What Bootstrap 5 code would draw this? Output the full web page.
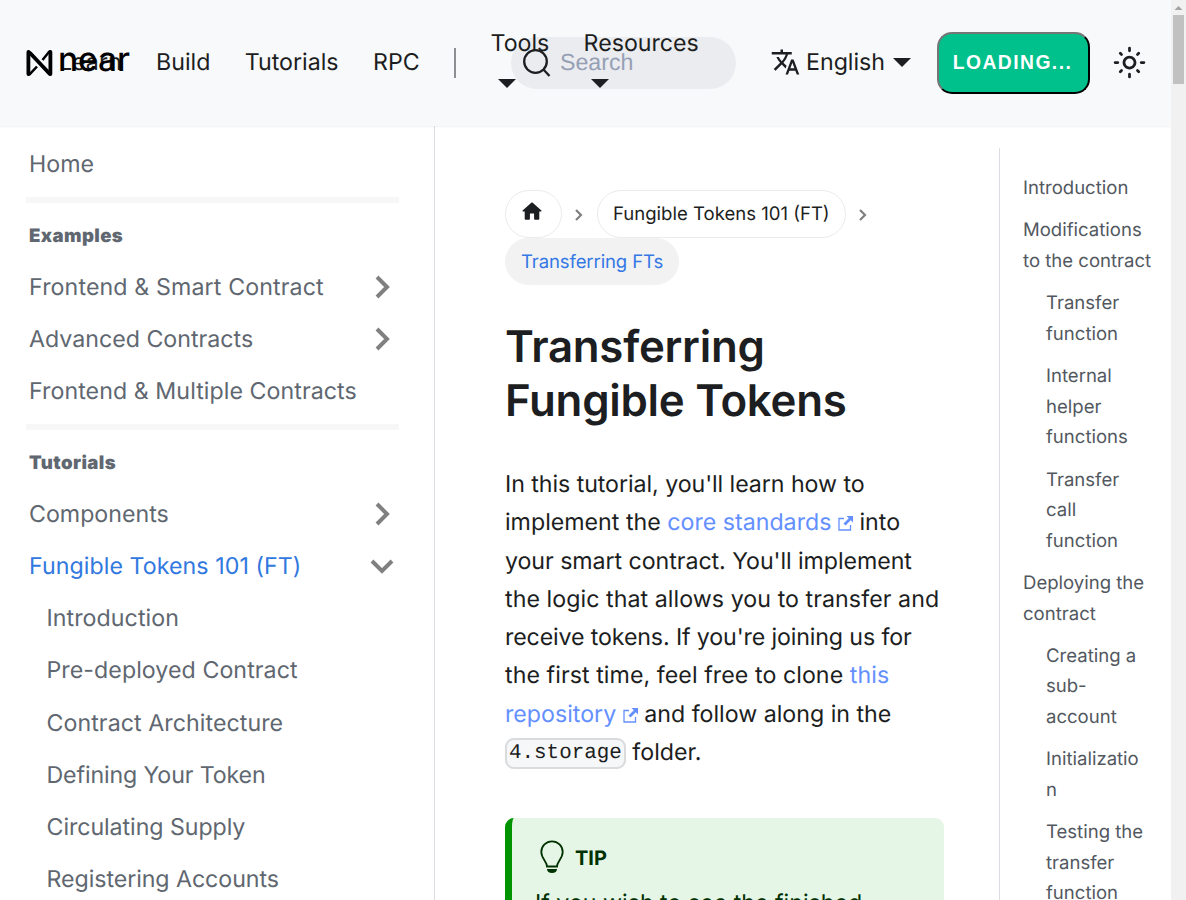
<!DOCTYPE html>
<html lang="en">
<head>
<meta charset="utf-8">
<meta name="viewport" content="width=device-width, initial-scale=1">
<title>Transferring Fungible Tokens | NEAR Documentation</title>
<link href="https://cdn.jsdelivr.net/npm/bootstrap@5.3.0/dist/css/bootstrap.min.css" rel="stylesheet">
<style>
body{font-family:Inter,"Liberation Sans",sans-serif;font-size:23.2px;line-height:38.3px;color:#1c1e21;height:900px;text-rendering:geometricPrecision}
a{text-decoration:none;color:inherit}
.page{width:1171px}
.topbar{height:126px;background:#f8f9fb;box-shadow:0 1px 2px rgba(0,0,0,.06);position:relative;z-index:3;padding-bottom:1px}
.left-items{width:511px;padding-left:59px;position:relative;z-index:2;white-space:nowrap}
.logo{position:absolute;left:26px;top:43px;z-index:3}
.logo svg{position:relative;top:-1px}
.logo-word{font-size:33.5px;font-weight:500;line-height:38px;color:#000;position:absolute;left:32px;top:-2px;letter-spacing:-.1px}
.left-items .item{margin-right:34.4px}
.rule{width:2px;height:30px;background:#8e8f92;margin-right:34.5px}
.drop{width:58px;margin-right:35px;height:77px}
.drop.wide{width:114px}
.dlab{line-height:38px;margin-bottom:17px}
.tri{border:9px solid transparent;border-top-color:#1c1e21;border-bottom:0;display:inline-block}
.drop .tri{margin-left:7px}
.search{width:225px;height:52px;background:#ebecf0;border-radius:26px;padding-left:12px;color:#96a0b5;font-family:"Liberation Sans",sans-serif}
.search span{margin-left:9px}
.lang{margin-left:33px}
.load{width:153px;height:62px;border:2px outset #1c1e21;border-color:#767676 #1c1e21 #1c1e21 #767676;border-radius:15px;background:#00c08b;color:#fff;font:bold 19.3px "Liberation Sans",sans-serif;letter-spacing:1.45px;margin-left:26px;margin-right:23px;padding:0 2px 0 0}
.side{width:435px;border-right:1px solid #dadde1;color:#606770;padding:12px 36px 0 26px}
.side .entry{height:52.15px;padding:0 3px;white-space:nowrap}
.side .sub{padding-left:20.5px}
.side .sep{height:6px;background:#f7f7f7;width:373px;margin:7px 0 8px}
.side .sep.second{margin-top:6.5px}
.side .group{font-size:18.6px;font-weight:900;height:50px;padding:1px 3px 0;letter-spacing:.4px}
.open-entry{color:#3178e0}
.chev{margin-right:4px}
.chev-down{margin-right:1px}
.wider{letter-spacing:.12px}
.wide-a{letter-spacing:.06px}
.tight-a{letter-spacing:-.06px}
.tight-b{letter-spacing:-.13px}
.main-col{padding:64px 0 0 70px;width:564px}
.crumb{height:47.5px;border:1px solid #ebebeb;border-radius:24px;padding:0 15px;font-size:18.56px;line-height:47px}
.crumb.home{width:57px}
.crumb.home svg{margin:-4px 3px 0 0}
.crumb.current{background:#f2f2f2;color:#3578e5;border-color:#f2f2f2;letter-spacing:-.12px;line-height:46px}
.crumbs{width:440px}
h1{font-size:43.8px;line-height:54px;font-weight:600;letter-spacing:-.25px;margin-top:35px}
.article{margin-top:37px}
.lnk{color:#6490ff}
.code-bit{font:20.9px/24px "Liberation Mono",monospace;color:#1c1e21;background:#f6f7f8;border:2px solid #dadbdd;border-radius:9px;padding:2px 2px;vertical-align:2px}
.tip{width:439px;height:200px;background:#e6f6e6;border-left:7px solid #009400;border-radius:9px;color:#003100;padding:20px 23px;margin-top:47px}
.tip-head{font-size:20px;height:40px}
.tip-head svg{margin:-2px 11px 0 5px}
.tip p{margin-top:6px}
.toc{border-left:1px solid #dadde1;margin-top:22px;width:172px;padding:25px 12px 0 23px;color:#525860;font-size:18.56px;line-height:30.6px}
.toc div{margin-bottom:11.7px;overflow-wrap:anywhere}
.toc .deep{padding-left:23px}
.scroller{width:15px;background:#f1f1f1}
</style>
</head>
<body class="d-flex overflow-hidden bg-white">
<div class="page d-flex flex-column flex-shrink-0 overflow-hidden">
<header class="topbar d-flex align-items-center flex-shrink-0">
  <a class="logo" href="#" aria-label="near"><svg width="27" height="28" viewBox="0 0 27 28"><path d="M2.300 24V4Q2.300 1.800 4 3.300L22.500 24.500Q24.500 26.500 24.500 24V4Q24.500 1.500 22.500 3.500L16.500 11M2.300 24Q2.300 26.500 4.300 24.700L11 17.500" fill="none" stroke="#000" stroke-width="2.500"/><path d="M2.400 3V25M24.400 3V25" stroke="#000" stroke-width="3.800" stroke-linecap="round"/><path d="M4 4 23 24" stroke="#000" stroke-width="3.800"/></svg><span class="logo-word">near</span></a>
  <nav class="left-items d-flex align-items-center flex-shrink-0">
    <a class="item" href="#">Learn</a><a class="item" href="#">Build</a><a class="item" href="#">Tutorials</a><a class="item" href="#">RPC</a>
    <span class="rule flex-shrink-0"></span>
    <a class="drop flex-shrink-0 d-flex flex-column" href="#"><span class="dlab">Tools</span><i class="tri align-self-start"></i></a>
    <a class="drop wide flex-shrink-0 d-flex flex-column" href="#"><span class="dlab">Resources</span><i class="tri align-self-start"></i></a>
  </nav>
  <div class="search d-flex align-items-center flex-shrink-0"><svg width="28" height="28" viewBox="0 0 28 28" fill="none" stroke="#1c1e21" stroke-width="2.3"><circle cx="12.500" cy="12.500" r="11.300"/><path d="m20 20 6.500 7"/></svg><span>Search</span></div>
  <a class="lang d-flex align-items-center flex-shrink-0" href="#"><svg width="33" height="30" viewBox="0 0 24 24" fill="#1c1e21"><path d="m12.870 15.070-2.540-2.510.030-.030A17.520 17.520 0 0 0 14.070 6H17V4h-7V2H8v2H1v1.990h11.170C11.500 7.920 10.440 9.750 9 11.350 8.070 10.320 7.300 9.190 6.690 8h-2c.730 1.630 1.730 3.170 2.980 4.560l-5.090 5.020L4 19l5-5 3.110 3.110.760-2.040zM18.500 10h-2L12 22h2l1.120-3h4.750L21 22h2l-4.500-12zm-2.620 7 1.620-4.330L19.120 17h-3.240z"/></svg><span class="ms-1">English</span><i class="tri ms-2"></i></a>
  <button class="load flex-shrink-0" type="button">LOADING...</button>
  <svg class="flex-shrink-0" width="33" height="33" viewBox="0 0 24 24" fill="#1c1e21"><path d="M12 9c1.650 0 3 1.350 3 3s-1.350 3-3 3-3-1.350-3-3 1.350-3 3-3m0-2c-2.760 0-5 2.240-5 5s2.240 5 5 5 5-2.240 5-5-2.240-5-5-5z"/><path d="M12 1.500v2M12 20.500v2M1.500 12h2M20.500 12h2M5.300 5.300l.9.900M17.800 17.800l.9.900M5.300 18.700l.9-.9M17.800 6.200l.9-.9" stroke="#1c1e21" stroke-width="2" stroke-linecap="round"/></svg>
</header>
<div class="d-flex flex-grow-1">
  <aside class="side flex-shrink-0">
    <div class="entry d-flex align-items-center">Home</div>
    <div class="sep"></div>
    <div class="group d-flex align-items-center">Examples</div>
    <div class="entry wider d-flex align-items-center justify-content-between">Frontend &amp; Smart Contract<svg class="chev" width="16" height="24" viewBox="0 0 16 24"><path d="m2 2 10 10L2 22" fill="none" stroke="#808080" stroke-width="4"/></svg></div>
    <div class="entry d-flex align-items-center justify-content-between">Advanced Contracts<svg class="chev" width="16" height="24" viewBox="0 0 16 24"><path d="m2 2 10 10L2 22" fill="none" stroke="#808080" stroke-width="4"/></svg></div>
    <div class="entry wide-a d-flex align-items-center">Frontend &amp; Multiple Contracts</div>
    <div class="sep second"></div>
    <div class="group d-flex align-items-center">Tutorials</div>
    <div class="entry d-flex align-items-center justify-content-between">Components<svg class="chev" width="16" height="24" viewBox="0 0 16 24"><path d="m2 2 10 10L2 22" fill="none" stroke="#808080" stroke-width="4"/></svg></div>
    <div class="entry open-entry wide-a d-flex align-items-center justify-content-between">Fungible Tokens 101 (FT)<svg class="chev-down" width="24" height="16" viewBox="0 0 24 16"><path d="m2 3 10 10L22 3" fill="none" stroke="#808080" stroke-width="4"/></svg></div>
    <div class="entry sub wide-a d-flex align-items-center">Introduction</div>
    <div class="entry sub wide-a d-flex align-items-center">Pre-deployed Contract</div>
    <div class="entry sub wide-a d-flex align-items-center">Contract Architecture</div>
    <div class="entry sub tight-b d-flex align-items-center">Defining Your Token</div>
    <div class="entry sub tight-a d-flex align-items-center">Circulating Supply</div>
    <div class="entry sub tight-a d-flex align-items-center">Registering Accounts</div>
  </aside>
  <main class="main-col flex-shrink-0">
    <nav class="crumbs d-flex flex-wrap align-items-center">
      <a class="crumb home d-flex align-items-center justify-content-center" href="#"><svg class="flex-shrink-0" width="26" height="25" viewBox="0 0 24 24" fill="#1c1e21"><path d="M10 19v-5h4v5c0 .550.450 1 1 1h3c.550 0 1-.450 1-1v-7h1.700c.460 0 .680-.570.330-.870L12.670 3.600c-.380-.340-.960-.340-1.340 0l-8.360 7.530c-.340.300-.130.870.330.870H5v7c0 .550.450 1 1 1h3c.550 0 1-.450 1-1z"/></svg></a>
      <svg width="35" height="14" viewBox="0 0 35 14"><path d="m14 3 5 5-5 5" fill="none" stroke="#808080" stroke-width="2.200"/></svg>
      <a class="crumb" href="#">Fungible Tokens 101 (FT)</a>
      <svg width="35" height="14" viewBox="0 0 35 14"><path d="m14 3 5 5-5 5" fill="none" stroke="#808080" stroke-width="2.200"/></svg>
      <span class="crumb current">Transferring FTs</span>
    </nav>
    <h1 class="mb-0">Transferring<br>Fungible Tokens</h1>
    <p class="text-nowrap mb-0 article"><span class="tight-a">In this tutorial, you'll learn how to</span><br>implement the <a class="lnk" href="#">core standards <svg width="15" height="15" viewBox="0 0 15 15" fill="none" stroke="currentColor" stroke-width="1.300"><path d="M6 2.500H1v11.500h11.500V9"/><path d="M8.500 0H15v6.500l-2.200-2.200-5.300 5.200L5.500 7.500l5.300-5.300z" fill="currentColor" stroke="none"/></svg></a> into<br><span class="tight-a">your smart contract. You'll implement</span><br><span class="wide-a">the logic that allows you to transfer and</span><br><span class="tight-b">receive tokens. If you're joining us for</span><br><span class="wide-a">the first time, feel free to clone <a class="lnk" href="#">this</a></span><br><a class="lnk" href="#">repository <svg width="15" height="15" viewBox="0 0 15 15" fill="none" stroke="currentColor" stroke-width="1.300"><path d="M6 2.500H1v11.500h11.500V9"/><path d="M8.500 0H15v6.500l-2.200-2.200-5.300 5.200L5.500 7.500l5.300-5.300z" fill="currentColor" stroke="none"/></svg></a> and follow along in the<br><code class="code-bit">4.storage</code> folder.</p>
    <div class="tip"><div class="tip-head d-flex align-items-center fw-bold"><svg width="24" height="34" viewBox="0 0 24 34"><path d="M7 26.500c0-5-5.700-8-5.700-14.500a10.700 10.700 0 0 1 21.400 0c0 6.500-5.700 9.500-5.700 14.500z" fill="none" stroke="#003100" stroke-width="1.800"/><path d="M7 29h10c0 2.500-2 4-5 4s-5-1.500-5-4z" fill="#003100"/></svg>TIP</div><p class="text-nowrap">If you wish to see the finished</p></div>
  </main>
  <nav class="toc flex-shrink-0">
    <div>Introduction</div><div>Modifications<br>to the contract</div><div class="deep">Transfer<br>function</div><div class="deep">Internal<br>helper<br>functions</div><div class="deep">Transfer<br>call<br>function</div><div>Deploying the<br>contract</div><div class="deep">Creating a<br>sub-<br>account</div><div class="deep">Initializatio<br>n</div><div class="deep">Testing the<br>transfer<br>function</div>
  </nav>
</div>
</div>
<div class="scroller flex-shrink-0"><svg class="d-block" width="15" height="84" viewBox="0 0 15 84"><path d="M3.500 10h8L7.500 6z" fill="#a3a3a3"/><path d="M2 15h11v69H2z" fill="#c1c1c1"/></svg></div>
<script src="https://cdn.jsdelivr.net/npm/bootstrap@5.3.0/dist/js/bootstrap.bundle.min.js"></script>
</body>
</html>
